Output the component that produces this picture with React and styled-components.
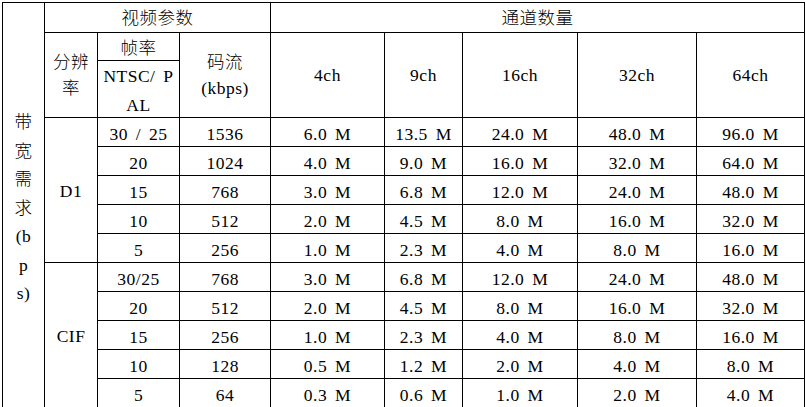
import React from "react";
import styled, { createGlobalStyle } from "styled-components";

const Global = createGlobalStyle`
  html, body {
    margin: 0;
    padding: 0;
    overflow: hidden;
    background: #fff;
  }
`;

const Page = styled.div`
  padding: 2px 0 0 2px;
`;

const Grid = styled.div`
  display: grid;
  width: 803px;
  box-sizing: border-box;
  grid-template-columns: 42px 53px 82px 91px 114px 78px 115px 119px 108px;
  grid-template-rows: 30px 28px 57px repeat(10, 29px);
  border-left: 1px solid #000;
  border-top: 1px solid #000;
  font-family: "Liberation Serif", "Noto Sans CJK SC", serif;
  font-size: 17.5px;
  font-weight: 300;
  color: #000;
`;

const Cell = styled.div`
  box-sizing: border-box;
  border-right: 1px solid #000;
  border-bottom: 1px solid #000;
  display: flex;
  flex-direction: column;
  align-items: center;
  justify-content: center;
  text-align: center;
  white-space: pre;
  line-height: ${(p) => p.$lh || 20}px;
  padding-top: ${(p) => p.$pt || 0}px;
  letter-spacing: 0.5px;
  word-spacing: 3px;
  grid-column: ${(p) => p.$col || "auto"};
  grid-row: ${(p) => p.$row || "auto"};
`;

const Line = styled.span`
  display: block;
`;

const rows = [
  ["30 / 25", "1536", "6.0 M", "13.5 M", "24.0 M", "48.0 M", "96.0 M"],
  ["20", "1024", "4.0 M", "9.0 M", "16.0 M", "32.0 M", "64.0 M"],
  ["15", "768", "3.0 M", "6.8 M", "12.0 M", "24.0 M", "48.0 M"],
  ["10", "512", "2.0 M", "4.5 M", "8.0 M", "16.0 M", "32.0 M"],
  ["5", "256", "1.0 M", "2.3 M", "4.0 M", "8.0 M", "16.0 M"],
  ["30/25", "768", "3.0 M", "6.8 M", "12.0 M", "24.0 M", "48.0 M"],
  ["20", "512", "2.0 M", "4.5 M", "8.0 M", "16.0 M", "32.0 M"],
  ["15", "256", "1.0 M", "2.3 M", "4.0 M", "8.0 M", "16.0 M"],
  ["10", "128", "0.5 M", "1.2 M", "2.0 M", "4.0 M", "8.0 M"],
  ["5", "64", "0.3 M", "0.6 M", "1.0 M", "2.0 M", "4.0 M"],
];

const channels = ["4ch", "9ch", "16ch", "32ch", "64ch"];
const bandLines = ["带", "宽", "需", "求", "(b", "p", "s)"];

export default function App() {
  return (
    <Page>
      <Global />
      <Grid>
        <Cell $col="1" $row="1 / 14" $lh={28.5} $pt={6}>
          {bandLines.map((l) => (
            <Line key={l}>{l}</Line>
          ))}
        </Cell>
        <Cell $col="2 / 5" $row="1">视频参数</Cell>
        <Cell $col="5 / 10" $row="1">通道数量</Cell>
        <Cell $col="2" $row="2 / 4" $lh={26}>
          <Line>分辨</Line>
          <Line>率</Line>
        </Cell>
        <Cell $col="3" $row="2" $pt={2}>帧率</Cell>
        <Cell $col="3" $row="3" $lh={29} $pt={3}>
          <Line>NTSC/ P</Line>
          <Line>AL</Line>
        </Cell>
        <Cell $col="4" $row="2 / 4" $lh={26}>
          <Line>码流</Line>
          <Line>(kbps)</Line>
        </Cell>
        {channels.map((c, i) => (
          <Cell key={c} $col={`${5 + i}`} $row="2 / 4">
            {c}
          </Cell>
        ))}
        <Cell $col="2" $row="4 / 9" $pt={2}>D1</Cell>
        <Cell $col="2" $row="9 / 14" $pt={2}>CIF</Cell>
        {rows.map((r, ri) =>
          r.map((v, ci) => (
            <Cell key={`${ri}-${ci}`} $pt={3}>
              {v}
            </Cell>
          ))
        )}
      </Grid>
    </Page>
  );
}
